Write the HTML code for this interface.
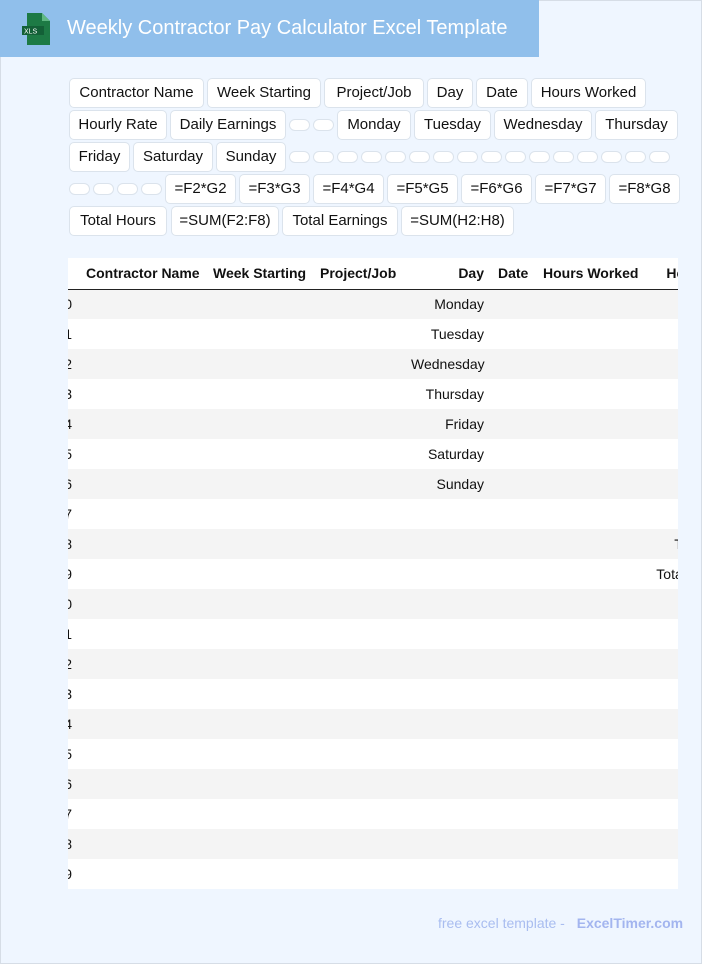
<!DOCTYPE html>
<html><head><meta charset="utf-8"><style>
*{box-sizing:border-box;margin:0;padding:0}
body{width:702px;height:964px;background:#eff6ff;font-family:"Liberation Sans",Arial,sans-serif;position:relative;overflow:hidden;box-shadow:inset 0 0 0 1px #d6dde6}
.hdr{position:absolute;left:0;top:0;width:539px;height:57px;background:#90bfeb}
.hdr .t{position:absolute;left:67px;top:17px;color:#fff;font-size:20px;white-space:nowrap}
.row{position:absolute;left:69px;display:flex;gap:3px;align-items:center}
.c{height:30px;background:#fff;border:1px solid #dbe3ec;border-radius:5px;padding:0;text-align:center;font-size:15px;line-height:28px;color:#111;white-space:nowrap;overflow:hidden}
.e{width:21px;height:12px;background:#fff;border:1px solid #dbe3ec;border-radius:6px}
.tw{position:absolute;left:68px;top:258px;width:610px;height:631px;overflow:hidden;background:#fff}
table{position:absolute;left:-28px;top:0;border-collapse:collapse;table-layout:fixed;width:712px}
td,th{height:30px;padding:0 7px;font-size:14px;white-space:nowrap;overflow:hidden;color:#111}
th{text-align:left;font-weight:bold;border-bottom:1px solid #222;height:31px}
tbody tr:nth-child(odd){background:#f4f4f4}
.r{text-align:right}
.f{position:absolute;top:915px;left:438px;font-size:14px;color:#a9bdf0;white-space:nowrap}
.f b{margin-left:8px;color:#a3b5ef}
.fm{width:71px}
</style></head><body>
<div class="hdr">
<svg style="position:absolute;left:22px;top:13px" width="28" height="32" viewBox="0 0 28 32"><path d="M5 0h15l8 8v24H5z" fill="#1d7a45"/><path d="M20 0v8h8z" fill="#5fb883"/><rect x="0" y="13" width="22" height="9" fill="#136037"/><text x="2" y="20.5" font-size="7" fill="#fff" font-family="Liberation Sans">XLS</text></svg>
<div class="t">Weekly Contractor Pay Calculator Excel Template</div></div>
<div class="row" style="top:78px"><div class="c" style="width:135px">Contractor Name</div><div class="c" style="width:114px">Week Starting</div><div class="c" style="width:100px">Project/Job</div><div class="c" style="width:46px">Day</div><div class="c" style="width:52px">Date</div><div class="c" style="width:115px">Hours Worked</div></div>
<div class="row" style="top:110px"><div class="c" style="width:98px">Hourly Rate</div><div class="c" style="width:116px">Daily Earnings</div><div class="e"></div><div class="e"></div><div class="c" style="width:74px">Monday</div><div class="c" style="width:77px">Tuesday</div><div class="c" style="width:98px">Wednesday</div><div class="c" style="width:83px">Thursday</div></div>
<div class="row" style="top:142px"><div class="c" style="width:61px">Friday</div><div class="c" style="width:80px">Saturday</div><div class="c" style="width:70px">Sunday</div><div class="e"></div><div class="e"></div><div class="e"></div><div class="e"></div><div class="e"></div><div class="e"></div><div class="e"></div><div class="e"></div><div class="e"></div><div class="e"></div><div class="e"></div><div class="e"></div><div class="e"></div><div class="e"></div><div class="e"></div><div class="e"></div></div>
<div class="row" style="top:174px"><div class="e"></div><div class="e"></div><div class="e"></div><div class="e"></div><div class="c fm">=F2*G2</div><div class="c fm">=F3*G3</div><div class="c fm">=F4*G4</div><div class="c fm">=F5*G5</div><div class="c fm">=F6*G6</div><div class="c fm">=F7*G7</div><div class="c fm">=F8*G8</div></div>
<div class="row" style="top:206px"><div class="c" style="width:98px">Total Hours</div><div class="c" style="width:108px;margin-left:1px">=SUM(F2:F8)</div><div class="c" style="width:116px">Total Earnings</div><div class="c" style="width:113px">=SUM(H2:H8)</div></div>
<div class="tw"><table>
<colgroup><col style="width:39px"><col style="width:127px"><col style="width:107px"><col style="width:91px"><col style="width:87px"><col style="width:45px"><col style="width:109px"><col style="width:107px"></colgroup>
<thead><tr><th></th><th>Contractor Name</th><th>Week Starting</th><th>Project/Job</th><th class="r">Day</th><th>Date</th><th>Hours Worked</th><th class="r">Hourly Rate</th></tr></thead>
<tbody>
<tr><td class="r">10</td><td></td><td></td><td></td><td class="r">Monday</td><td></td><td></td><td></td></tr>
<tr><td class="r">11</td><td></td><td></td><td></td><td class="r">Tuesday</td><td></td><td></td><td></td></tr>
<tr><td class="r">12</td><td></td><td></td><td></td><td class="r">Wednesday</td><td></td><td></td><td></td></tr>
<tr><td class="r">13</td><td></td><td></td><td></td><td class="r">Thursday</td><td></td><td></td><td></td></tr>
<tr><td class="r">14</td><td></td><td></td><td></td><td class="r">Friday</td><td></td><td></td><td></td></tr>
<tr><td class="r">15</td><td></td><td></td><td></td><td class="r">Saturday</td><td></td><td></td><td></td></tr>
<tr><td class="r">16</td><td></td><td></td><td></td><td class="r">Sunday</td><td></td><td></td><td></td></tr>
<tr><td class="r">17</td><td></td><td></td><td></td><td></td><td></td><td></td><td></td></tr>
<tr><td class="r">18</td><td></td><td></td><td></td><td></td><td></td><td></td><td class="r">Total Hours</td></tr>
<tr><td class="r">19</td><td></td><td></td><td></td><td></td><td></td><td></td><td class="r">Total Earnings</td></tr>
<tr><td class="r">20</td><td></td><td></td><td></td><td></td><td></td><td></td><td></td></tr>
<tr><td class="r">21</td><td></td><td></td><td></td><td></td><td></td><td></td><td></td></tr>
<tr><td class="r">22</td><td></td><td></td><td></td><td></td><td></td><td></td><td></td></tr>
<tr><td class="r">23</td><td></td><td></td><td></td><td></td><td></td><td></td><td></td></tr>
<tr><td class="r">24</td><td></td><td></td><td></td><td></td><td></td><td></td><td></td></tr>
<tr><td class="r">25</td><td></td><td></td><td></td><td></td><td></td><td></td><td></td></tr>
<tr><td class="r">26</td><td></td><td></td><td></td><td></td><td></td><td></td><td></td></tr>
<tr><td class="r">27</td><td></td><td></td><td></td><td></td><td></td><td></td><td></td></tr>
<tr><td class="r">28</td><td></td><td></td><td></td><td></td><td></td><td></td><td></td></tr>
<tr><td class="r">29</td><td></td><td></td><td></td><td></td><td></td><td></td><td></td></tr>
</tbody></table></div>
<div class="f">free excel template - <b>ExcelTimer.com</b></div>
</body></html>
